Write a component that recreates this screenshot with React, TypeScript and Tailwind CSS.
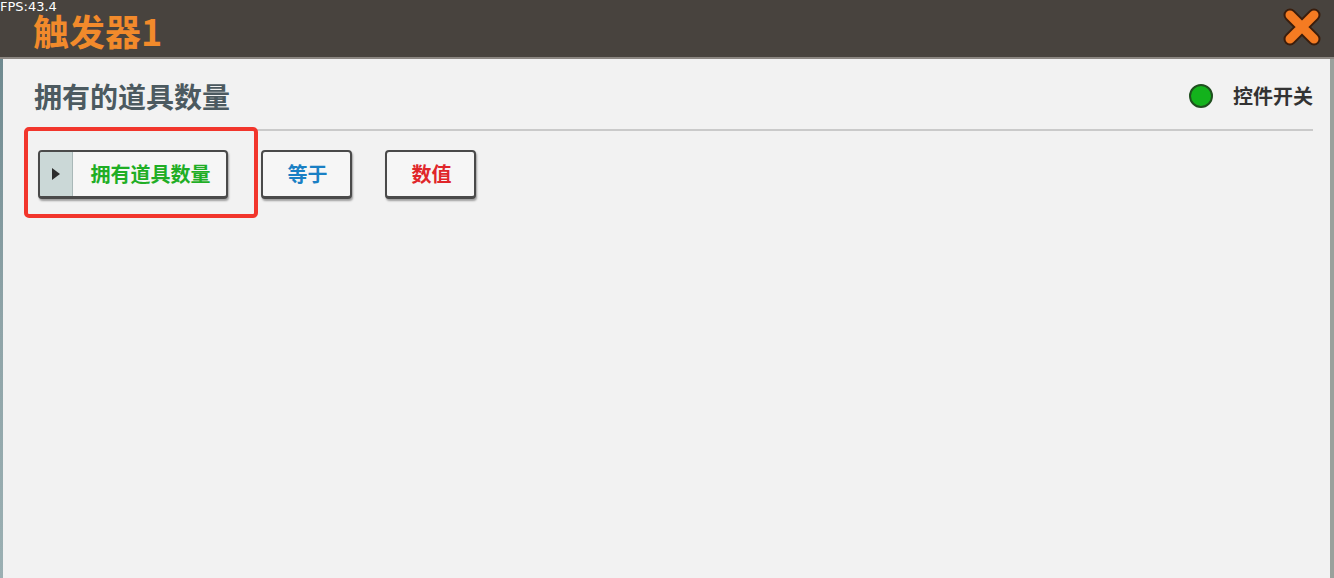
import React from "react";

const cjk = { fontFamily: '"Noto Sans CJK SC", "Noto Sans", sans-serif' };

const CloseIcon: React.FC = () => (
  <svg width="40" height="42" viewBox="0 0 40 42">
    <g strokeLinecap="round">
      <path d="M8 9 L32 33 M32 9 L8 33" stroke="#3a1d0c" strokeWidth="13" />
      <path d="M8 9 L32 33 M32 9 L8 33" stroke="#f57b22" strokeWidth="9" />
    </g>
  </svg>
);

const GameButton: React.FC<{ label: string; color: string; width: string; arrow?: boolean }> = ({
  label,
  color,
  width,
  arrow,
}) => (
  <div
    className={`flex h-[49px] ${width} rounded-[4px] border-2 border-b-[3px] border-[#4a4a4a] bg-[#f6f6f6] shadow-[1px_2px_2px_rgba(0,0,0,0.35)] overflow-hidden`}
  >
    {arrow && (
      <div className="flex w-[33px] items-center justify-center border-r border-[#a9b8b8] bg-[#cbd8d7]">
        <svg width="8" height="12" viewBox="0 0 8 12">
          <path d="M0 0 L8 6 L0 12 Z" fill="#2d2d2d" />
        </svg>
      </div>
    )}
    <div className={`flex flex-1 items-center justify-center pl-[2px] text-[20px] font-bold ${color}`}>{label}</div>
  </div>
);

const App: React.FC = () => {
  return (
    <div className="relative flex h-[578px] w-[1334px] flex-col overflow-hidden bg-[#f2f2f2]" style={cjk}>
      {/* top bar */}
      <div className="flex h-[59px] shrink-0 items-center justify-between border-b-2 border-[#8c8782] bg-[#48433e] pl-[33px] pr-[12px]">
        <h1 className="pt-[2px] text-[36px] font-bold leading-none text-[#f28a2b]">触发器1</h1>
        <div className="-mt-[4px]">
          <CloseIcon />
        </div>
      </div>
      <span
        className="absolute left-0 top-0 text-[13px] leading-[13px] text-white"
        style={{ fontFamily: '"DejaVu Sans", sans-serif' }}
      >
        FPS:43.4
      </span>

      {/* body */}
      <div className="flex flex-1">
        <div className="w-[3px] bg-gradient-to-b from-[#6f8a90] via-[#8fa4a8] to-[#9bb0b3]" />
        <div className="flex flex-1 flex-col pl-[31px] pr-[17px]">
          <div className="flex h-[72px] items-center justify-between border-b-2 border-[#cacaca] pt-[4px]">
            <h2 className="text-[28px] font-bold text-[#4c5a60]">拥有的道具数量</h2>
            <div className="flex items-center gap-[20px]">
              <span className="h-[24px] w-[24px] rounded-full border-2 border-[#1f4f1f] bg-[#13b21c]" />
              <span className="text-[20px] font-bold text-[#333333]">控件开关</span>
            </div>
          </div>

          <div className="relative mt-[19px] flex items-start gap-[33px] pl-[4px]">
            <div className="absolute left-[-10px] top-[-23px] h-[91px] w-[234px] rounded-[5px] border-4 border-[#f2362c]" />
            <GameButton label="拥有道具数量" color="text-[#1fae25]" width="w-[190px]" arrow />
            <GameButton label="等于" color="text-[#1a80c4]" width="w-[91px]" />
            <GameButton label="数值" color="text-[#e0262a]" width="w-[91px]" />
          </div>
        </div>
        <div className="w-[4px] bg-[#9aa19c]" />
      </div>
    </div>
  );
};

export default App;
